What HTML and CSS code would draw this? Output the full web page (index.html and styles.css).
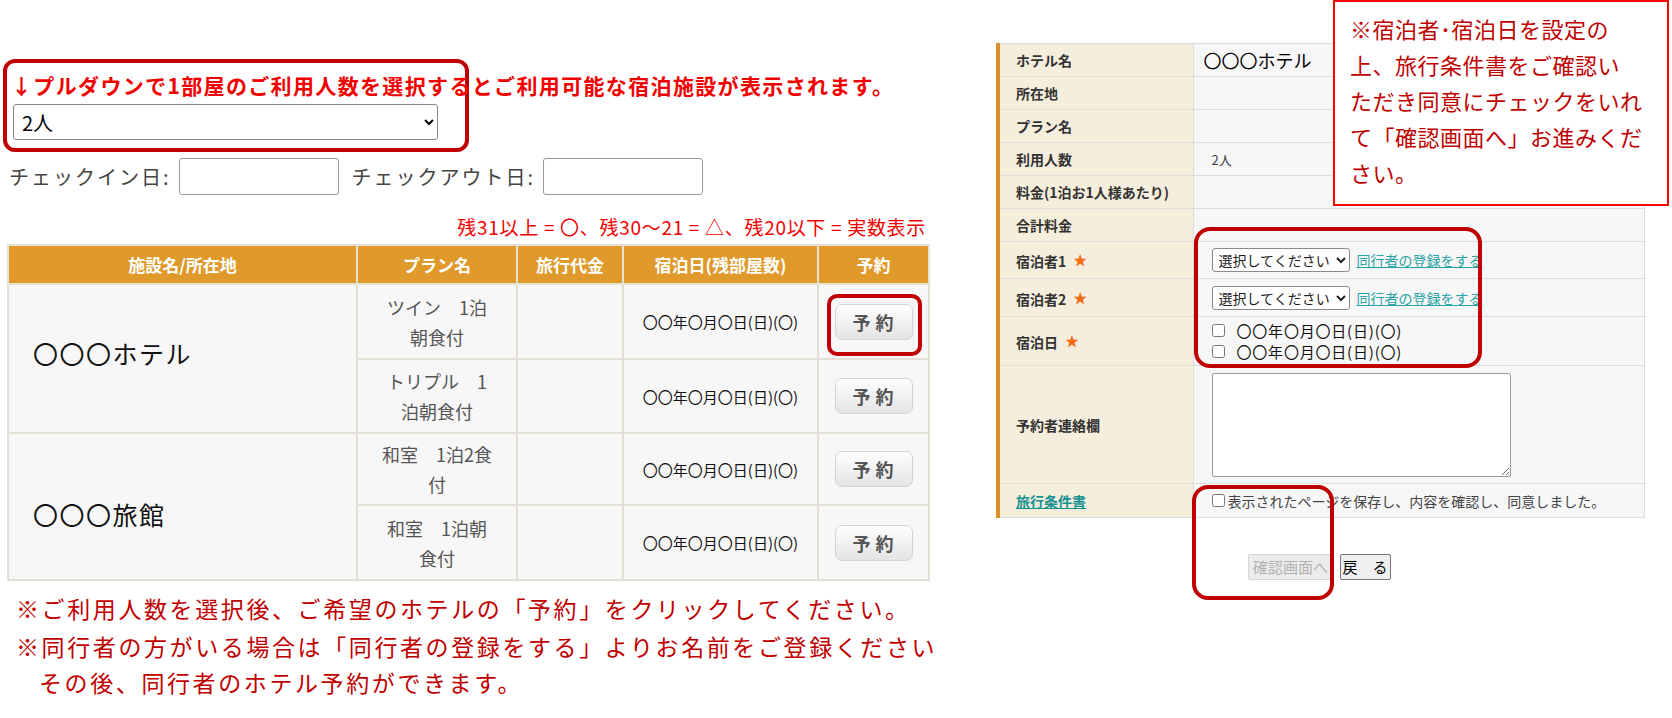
FILE: index.html
```html
<!DOCTYPE html>
<html lang="ja">
<head>
<meta charset="utf-8">
<title>宿泊予約</title>
<link rel="stylesheet" href="styles.css">
</head>
<body>
<div class="page">
  <section class="left">
    <div class="pick">
      <p class="lead">↓プルダウンで1部屋のご利用人数を選択するとご利用可能な宿泊施設が表示されます。</p>
      <select class="people"><option>2人</option></select>
    </div>
    <div class="dates">
      <label class="date-label">チェックイン日:</label>
      <input class="date-input" type="text">
      <label class="date-label date-label-out">チェックアウト日:</label>
      <input class="date-input date-input-out" type="text">
    </div>
    <p class="legend">残31以上 = 〇、残30～21 = △、残20以下 = 実数表示</p>
    <table class="plans">
      <colgroup>
        <col class="c-name"><col class="c-plan"><col class="c-price"><col class="c-date"><col class="c-book">
      </colgroup>
      <thead>
        <tr><th>施設名/所在地</th><th>プラン名</th><th>旅行代金</th><th>宿泊日(残部屋数)</th><th>予約</th></tr>
      </thead>
      <tbody>
        <tr class="r1">
          <td class="facility" rowspan="2">〇〇〇ホテル</td>
          <td class="plan">ツイン　1泊<br>朝食付</td>
          <td></td>
          <td class="stay">〇〇年〇月〇日(日)(〇)</td>
          <td><span class="btn-wrap"><button class="book">予約</button><span class="ring-btn"></span></span></td>
        </tr>
        <tr class="r2">
          <td class="plan">トリプル　1<br>泊朝食付</td>
          <td></td>
          <td class="stay">〇〇年〇月〇日(日)(〇)</td>
          <td><button class="book">予約</button></td>
        </tr>
        <tr class="r3">
          <td class="facility facility-2" rowspan="2">〇〇〇旅館</td>
          <td class="plan">和室　1泊2食<br>付</td>
          <td></td>
          <td class="stay">〇〇年〇月〇日(日)(〇)</td>
          <td><button class="book">予約</button></td>
        </tr>
        <tr class="r4">
          <td class="plan">和室　1泊朝<br>食付</td>
          <td></td>
          <td class="stay">〇〇年〇月〇日(日)(〇)</td>
          <td><button class="book">予約</button></td>
        </tr>
      </tbody>
    </table>
    <div class="notes">
      <p>※ご利用人数を選択後、ご希望のホテルの「予約」をクリックしてください。</p>
      <p>※同行者の方がいる場合は「同行者の登録をする」よりお名前をご登録ください</p>
      <p class="indent">その後、同行者のホテル予約ができます。</p>
    </div>
  </section>

  <section class="right">
    <table class="form">
      <colgroup><col class="f-label"><col class="f-value"></colgroup>
      <tbody>
        <tr class="h33"><th>ホテル名</th><td class="hotel">〇〇〇ホテル</td></tr>
        <tr class="h33"><th>所在地</th><td></td></tr>
        <tr class="h33"><th>プラン名</th><td></td></tr>
        <tr class="h33"><th>利用人数</th><td class="small">2人</td></tr>
        <tr class="h33"><th>料金(1泊お1人様あたり)</th><td></td></tr>
        <tr class="h33"><th>合計料金</th><td></td></tr>
        <tr class="h37"><th>宿泊者1<span class="star">★</span></th>
          <td><select class="guest"><option>選択してください</option></select><a class="link" href="#">同行者の登録をする</a></td></tr>
        <tr class="h38"><th>宿泊者2<span class="star">★</span></th>
          <td><select class="guest"><option>選択してください</option></select><a class="link" href="#">同行者の登録をする</a></td></tr>
        <tr class="h49"><th>宿泊日<span class="star">★</span></th>
          <td class="nights">
            <label class="night"><input type="checkbox"><span>〇〇年〇月〇日(日)(〇)</span></label>
            <label class="night"><input type="checkbox"><span>〇〇年〇月〇日(日)(〇)</span></label>
          </td></tr>
        <tr class="h118"><th>予約者連絡欄</th><td><textarea class="memo"></textarea></td></tr>
        <tr class="h34"><th><a class="terms" href="#">旅行条件書</a></th>
          <td class="agree"><label><input type="checkbox"><span>表示されたページを保存し、内容を確認し、同意しました。</span></label></td></tr>
      </tbody>
    </table>
    <div class="actions">
      <button class="confirm" disabled>確認画面へ</button><button class="back">戻　る</button>
    </div>
    <div class="ring ring-guests"></div>
    <div class="ring ring-submit"></div>
    <div class="callout">※宿泊者･宿泊日を設定の<br>上、旅行条件書をご確認い<br>ただき同意にチェックをいれ<br>て「確認画面へ」お進みくだ<br>さい。</div>
  </section>
</div>
</body>
</html>
```

FILE: styles.css
```css
body {
  margin: 0;
  background: #fff;
  color: #222;
  font-family: "Noto Sans CJK JP", "Noto Sans", sans-serif;
}

.page {
  display: flex;
  align-items: flex-start;
  width: 1672px;
  height: 718px;
  overflow: hidden;
}

/* ---------- left: plan list ---------- */
.left {
  flex: none;
  width: 960px;
  box-sizing: border-box;
  padding: 59px 0 0 3px;
}

.pick {
  width: 466px;
  height: 93px;
  box-sizing: border-box;
  border: 4px solid #c00000;
  border-radius: 12px;
  padding: 7px 0 0 6px;
}

.lead {
  margin: 0 0 4px -2px;
  font-size: 21px;
  font-weight: 700;
  line-height: 30px;
  letter-spacing: 1.35px;
  color: #f20000;
  white-space: nowrap;
}

.people {
  display: block;
  width: 425px;
  height: 36px;
  padding: 0 4px;
  border: 1px solid #8a8a8a;
  border-radius: 3px;
  background: #fff;
  color: #000;
  font-family: inherit;
  font-size: 20px;
}

.dates {
  display: flex;
  align-items: center;
  height: 37px;
  margin-top: 6px;
  padding-left: 6px;
}

.date-label {
  font-size: 20px;
  letter-spacing: 2px;
  color: #444;
  margin-right: 8px;
}

.date-label-out {
  margin-left: 13px;
}

.date-input {
  width: 160px;
  height: 37px;
  box-sizing: border-box;
  border: 1px solid #9a9a9a;
  border-radius: 3px;
  background: #fff;
}

.legend {
  width: 923px;
  margin: 20px 0 0;
  text-align: right;
  font-size: 19px;
  line-height: 24px;
  letter-spacing: 0.7px;
  color: #f20000;
}

.plans {
  width: 921px;
  margin: 5px 0 0 4px;
  border-collapse: collapse;
  table-layout: fixed;
}

.c-name { width: 349px; }
.c-plan { width: 160px; }
.c-price { width: 106px; }
.c-date { width: 195px; }
.c-book { width: 111px; }

.plans th {
  height: 37px;
  padding: 0;
  background: #df9a2b;
  border: 2px solid #e6e2d8;
  color: #fff;
  font-size: 17px;
  font-weight: 700;
}

.plans td {
  padding: 0;
  background: #f7f7f7;
  border: 2px solid #e3dfd6;
  text-align: center;
  vertical-align: middle;
}

.plans .r1, .plans .r4 { height: 75px; }
.plans .r2 { height: 74px; }
.plans .r3 { height: 72px; }

.plans .facility {
  text-align: left;
  padding: 0 0 12px 24px;
  font-size: 25px;
  letter-spacing: 1.5px;
  color: #111;
}

.plans .facility-2 {
  padding: 14px 0 0 24px;
}

.plan {
  font-size: 18px;
  line-height: 30px;
  color: #555;
}

.stay {
  font-size: 15px;
  color: #111;
}

.book {
  width: 78px;
  height: 36px;
  padding: 0 0 0 4px;
  border: 1px solid #d4d4d4;
  border-radius: 7px;
  background: linear-gradient(#fefefe, #e4e4e4);
  box-shadow: inset 0 1px 0 #fff;
  color: #555;
  font-family: inherit;
  font-size: 18px;
  font-weight: 700;
  letter-spacing: 5px;
}

.btn-wrap {
  position: relative;
  display: inline-block;
  vertical-align: middle;
}

.btn-wrap .book {
  display: block;
}

.ring-btn {
  position: absolute;
  left: -8px;
  right: -9px;
  top: -10px;
  bottom: -16px;
  border: 4px solid #c00000;
  border-radius: 10px;
}

.notes {
  margin-top: 8px;
  padding-left: 13px;
  color: #c00000;
  font-size: 23px;
  letter-spacing: 2.6px;
}

.notes p {
  margin: 0;
  line-height: 38px;
  white-space: nowrap;
}

.notes .indent {
  padding-left: 23px;
  line-height: 34px;
}

/* ---------- right: booking form ---------- */
.right {
  position: relative;
  flex: none;
  width: 676px;
  height: 718px;
  box-sizing: border-box;
  margin-left: 36px;
  padding-top: 43px;
}

.form {
  width: 646px;
  border-collapse: collapse;
  table-layout: fixed;
}

.f-label { width: 195px; }
.f-value { width: 451px; }

.form th {
  padding: 0 0 0 16px;
  background: #f6eedd;
  border: 1px solid #ddd;
  border-left: 4px solid #dd9026;
  text-align: left;
  color: #333;
  font-size: 14px;
  font-weight: 700;
  white-space: nowrap;
}

.form td {
  padding: 0 0 0 18px;
  background: #f7f7f7;
  border: 1px solid #ddd;
  font-size: 14px;
  color: #333;
}

.h33 { height: 33px; }
.h34 { height: 34px; }
.h37 { height: 37px; }
.h38 { height: 38px; }
.h49 { height: 49px; }
.h118 { height: 118px; }

.form .hotel {
  padding-left: 10px;
  font-size: 18px;
  color: #000;
}

.form .small {
  font-size: 13px;
  color: #444;
}

.star {
  margin-left: 7px;
  color: #f26a12;
  font-size: 14px;
  vertical-align: 2px;
}

.guest {
  width: 138px;
  height: 24px;
  padding: 0 0 0 2px;
  border: 1px solid #8a8a8a;
  border-radius: 3px;
  background: #fff;
  color: #222;
  font-family: inherit;
  font-size: 14px;
  vertical-align: middle;
}

.link {
  margin-left: 7px;
  color: #2aa3a6;
  font-size: 14px;
  vertical-align: middle;
}

.nights {
  line-height: 21px;
}

.night {
  display: flex;
  align-items: center;
}

.night input,
.agree input {
  width: 13px;
  height: 13px;
  margin: 0;
}

.night span {
  margin-left: 12px;
  color: #111;
  font-size: 15px;
  letter-spacing: 0.8px;
}

.memo {
  display: block;
  width: 299px;
  height: 104px;
  box-sizing: border-box;
  border: 1px solid #999;
  border-radius: 2px;
  background: #fff;
  resize: vertical;
}

.terms {
  color: #15918f;
  font-size: 14px;
  font-weight: 700;
}

.agree label {
  display: flex;
  align-items: center;
  color: #444;
  font-size: 14px;
}

.agree span {
  margin-left: 3px;
}

.actions {
  width: 646px;
  margin-top: 36px;
  display: flex;
  justify-content: center;
  gap: 6px;
}

.actions button {
  height: 26px;
  padding: 0;
  border-radius: 2px;
  font-family: inherit;
  font-size: 15px;
  line-height: 22px;
  white-space: nowrap;
}

.confirm {
  width: 86px;
  border: 1px solid #d6d6d6;
  background: #ececec;
  color: #b0b0b0;
}

.back {
  width: 51px;
  border: 1px solid #777;
  background: #efefef;
  color: #000;
}

.ring {
  position: absolute;
  box-sizing: border-box;
  border: 4px solid #c00000;
  border-radius: 16px;
}

.ring-guests {
  left: 198px;
  top: 227px;
  width: 288px;
  height: 141px;
}

.ring-submit {
  left: 196px;
  top: 485px;
  width: 142px;
  height: 115px;
}

.callout {
  position: absolute;
  left: 337px;
  top: 0;
  width: 336px;
  height: 206px;
  box-sizing: border-box;
  padding: 8px 0 0 15px;
  border: 2px solid #f00;
  background: #fff;
  color: #c00000;
  font-size: 22px;
  line-height: 36px;
  letter-spacing: 0.5px;
  white-space: nowrap;
}
```
